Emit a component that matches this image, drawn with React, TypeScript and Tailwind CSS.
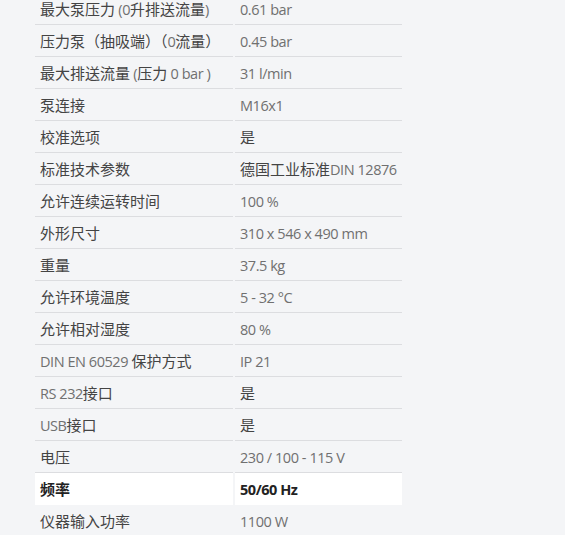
const rows: { label: string; value: string; active?: boolean }[] = [
  { label: "最大泵压力 (0升排送流量)", value: "0.61 bar" },
  { label: "压力泵（抽吸端）（0流量）", value: "0.45 bar" },
  { label: "最大排送流量 (压力 0 bar )", value: "31 l/min" },
  { label: "泵连接", value: "M16x1" },
  { label: "校准选项", value: "是" },
  { label: "标准技术参数", value: "德国工业标准DIN 12876" },
  { label: "允许连续运转时间", value: "100 %" },
  { label: "外形尺寸", value: "310 x 546 x 490 mm" },
  { label: "重量", value: "37.5 kg" },
  { label: "允许环境温度", value: "5 - 32 °C" },
  { label: "允许相对湿度", value: "80 %" },
  { label: "DIN EN 60529 保护方式", value: "IP 21" },
  { label: "RS 232接口", value: "是" },
  { label: "USB接口", value: "是" },
  { label: "电压", value: "230 / 100 - 115 V" },
  { label: "频率", value: "50/60 Hz", active: true },
  { label: "仪器输入功率", value: "1100 W" },
];

const CJK = /([\u3000-\u9fff\uff00-\uffef]+)/;

// Chinese glyphs render a touch larger than the Latin ones in the source page.
function Mixed({ text, active }: { text: string; active?: boolean }) {
  return (
    <>
      {text.split(CJK).map((part, i) =>
        part === "" ? null : CJK.test(part) ? (
          <span key={i} className={active ? "text-[15px] text-[#222]" : "text-[15px] text-[#444]"}>
            {part}
          </span>
        ) : (
          <span
            key={i}
            className={
              "text-[14.5px] tracking-[-0.45px] " + (active ? "text-[#222]" : "text-[#707070]")
            }
          >
            {part}
          </span>
        )
      )}
    </>
  );
}

export default function App() {
  return (
    <div
      className="h-[535px] w-[565px] overflow-hidden bg-[#f4f5f7] pl-[33px]"
      style={{ fontFamily: '"Open Sans", "Noto Sans CJK SC", sans-serif' }}
    >
      <table className="-mt-[7px] border-separate border-spacing-x-[2px] border-spacing-y-0">
        <tbody>
          {rows.map((r, i) => (
            <tr key={i} className={r.active ? "font-bold" : ""}>
              <td
                className={
                  "h-[32px] w-[198px] whitespace-nowrap border-b border-[#dcdde0] px-[5px] align-middle " +
                  (r.active ? "border-white bg-white" : "")
                }
              >
                <Mixed text={r.label} active={r.active} />
              </td>
              <td
                className={
                  "h-[32px] w-[167px] whitespace-nowrap border-b border-[#dcdde0] px-[5px] align-middle " +
                  (r.active ? "border-white bg-white" : "")
                }
              >
                <Mixed text={r.value} active={r.active} />
              </td>
            </tr>
          ))}
        </tbody>
      </table>
    </div>
  );
}
